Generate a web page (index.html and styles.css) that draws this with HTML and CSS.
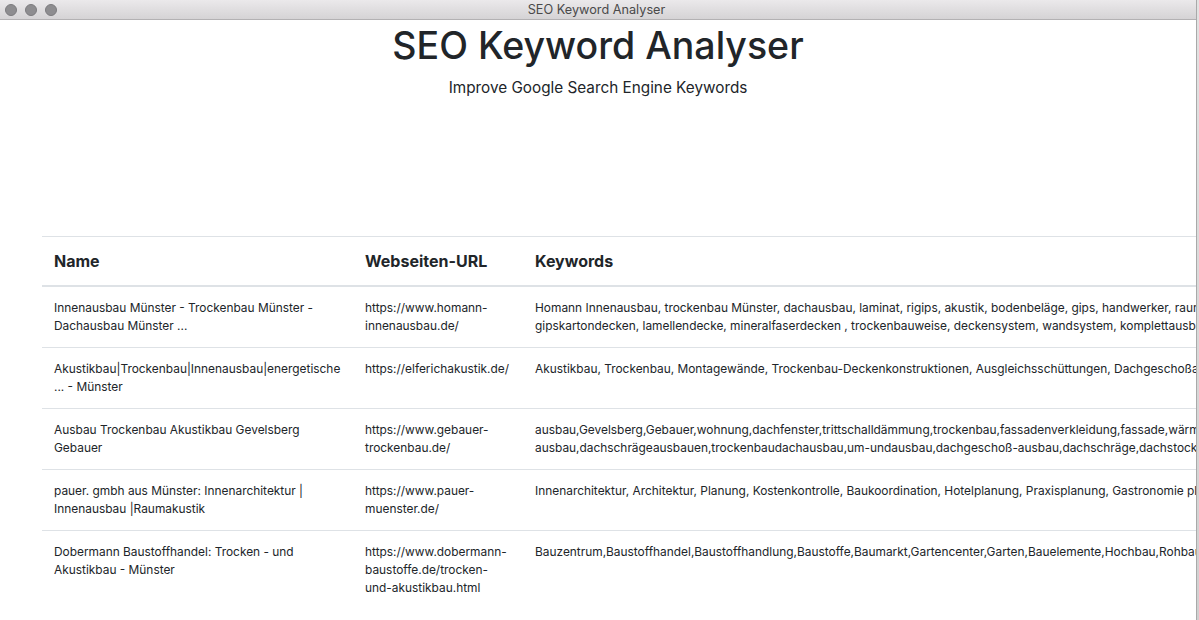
FILE: index.html
```html
<!DOCTYPE html>
<html lang="de">
<head>
<meta charset="utf-8">
<title>SEO Keyword Analyser</title>
<link rel="stylesheet" href="styles.css">
</head>
<body>
<div class="screen">
  <div class="window">
    <div class="titlebar">
      <div class="lights">
        <span class="light"></span>
        <span class="light"></span>
        <span class="light"></span>
      </div>
      <div class="window-title">SEO Keyword Analyser</div>
    </div>
    <main class="content">
      <header class="hero">
        <h1 class="hero-title">SEO Keyword Analyser</h1>
        <p class="hero-sub">Improve Google Search Engine Keywords</p>
      </header>
      <table class="kw-table">
        <colgroup>
          <col class="col-name">
          <col class="col-url">
          <col class="col-kw">
        </colgroup>
        <thead>
          <tr>
            <th>Name</th>
            <th>Webseiten-URL</th>
            <th>Keywords</th>
          </tr>
        </thead>
        <tbody>
          <tr>
            <td>Innenausbau Münster - Trockenbau Münster - Dachausbau Münster ...</td>
            <td>https://www.homann-innenausbau.de/</td>
            <td class="kw">Homann Innenausbau, trockenbau Münster, dachausbau, laminat, rigips, akustik, bodenbeläge, gips, handwerker, raumakustik, trockenbauwände,<br>gipskartondecken, lamellendecke, mineralfaserdecken , trockenbauweise, deckensystem, wandsystem, komplettausbau, innenausbau</td>
          </tr>
          <tr>
            <td>Akustikbau|Trockenbau|Innenausbau|energetische ... - Münster</td>
            <td>https://elferichakustik.de/</td>
            <td class="kw">Akustikbau, Trockenbau, Montagewände, Trockenbau-Deckenkonstruktionen, Ausgleichsschüttungen, Dachgeschoßausbau</td>
          </tr>
          <tr>
            <td>Ausbau Trockenbau Akustikbau Gevelsberg Gebauer</td>
            <td>https://www.gebauer-trockenbau.de/</td>
            <td class="kw">ausbau,Gevelsberg,Gebauer,wohnung,dachfenster,trittschalldämmung,trockenbau,fassadenverkleidung,fassade,wärmedämmung,<br>ausbau,dachschrägeausbauen,trockenbaudachausbau,um-undausbau,dachgeschoß-ausbau,dachschräge,dachstockausbau</td>
          </tr>
          <tr>
            <td>pauer. gmbh aus Münster: Innenarchitektur | Innenausbau |Raumakustik</td>
            <td>https://www.pauer-muenster.de/</td>
            <td class="kw">Innenarchitektur, Architektur, Planung, Kostenkontrolle, Baukoordination, Hotelplanung, Praxisplanung, Gastronomie planung</td>
          </tr>
          <tr>
            <td>Dobermann Baustoffhandel: Trocken - und Akustikbau - Münster</td>
            <td>https://www.dobermann-baustoffe.de/trocken-und-akustikbau.html</td>
            <td class="kw">Bauzentrum,Baustoffhandel,Baustoffhandlung,Baustoffe,Baumarkt,Gartencenter,Garten,Bauelemente,Hochbau,Rohbau</td>
          </tr>
        </tbody>
      </table>
    </main>
  </div>
  <div class="edge"></div>
</div>
</body>
</html>
```

FILE: styles.css
```css
* { box-sizing: border-box; }

html, body {
  margin: 0;
  padding: 0;
  height: 100%;
  overflow: hidden;
}

body {
  font-family: "Inter", "Liberation Sans", sans-serif;
  color: #212529;
  background: #d9d9d9;
}

.screen {
  display: flex;
  height: 620px;
  width: 1199px;
}

.window {
  width: 1196px;
  flex: 0 0 1196px;
  height: 620px;
  background: #fff;
  overflow: hidden;
  display: flex;
  flex-direction: column;
}

.edge {
  flex: 1;
  border-left: 1px solid #a9a9a9;
  background: linear-gradient(#e2e2e2, #d0d0d0);
}

.titlebar {
  height: 20px;
  flex: 0 0 20px;
  border-bottom: 1px solid #b3b1b3;
  background: linear-gradient(#ebe9eb, #d5d3d5);
  display: flex;
  align-items: center;
  position: relative;
}

.lights {
  display: flex;
  gap: 8px;
  padding-left: 5px;
}

.light {
  width: 12px;
  height: 12px;
  border-radius: 50%;
  background: #8e8d90;
  border: 1px solid #7c7b7e;
}

.window-title {
  position: absolute;
  left: 0;
  right: 0;
  top: 2px;
  text-align: center;
  font-size: 12.7px;
  line-height: 16px;
  color: #4a4a4a;
  padding-right: 3px;
}

.content {
  flex: 1;
  padding: 0 0 0 42px;
}

.hero {
  text-align: center;
  margin-left: -42px;
}

.hero-title {
  margin: 3px 0 0;
  font-size: 37.5px;
  font-weight: 500;
  line-height: 45px;
}

.hero-sub {
  margin: 8px 0 0;
  font-size: 15.3px;
  line-height: 24px;
}

.kw-table {
  margin-top: 136px;
  border-collapse: collapse;
  table-layout: fixed;
  width: 1700px;
  font-size: 11.9px;
  line-height: 18px;
}

.col-name { width: 311px; }
.col-url { width: 170px; }

.kw-table th {
  text-align: left;
  font-size: 16px;
  line-height: 24px;
  font-weight: 700;
  padding: 12px;
  border-top: 1px solid #dee2e6;
  border-bottom: 2px solid #dee2e6;
}

.kw-table td {
  padding: 12px;
  vertical-align: top;
  border-top: 1px solid #dee2e6;
}

.kw { white-space: nowrap; }
```
